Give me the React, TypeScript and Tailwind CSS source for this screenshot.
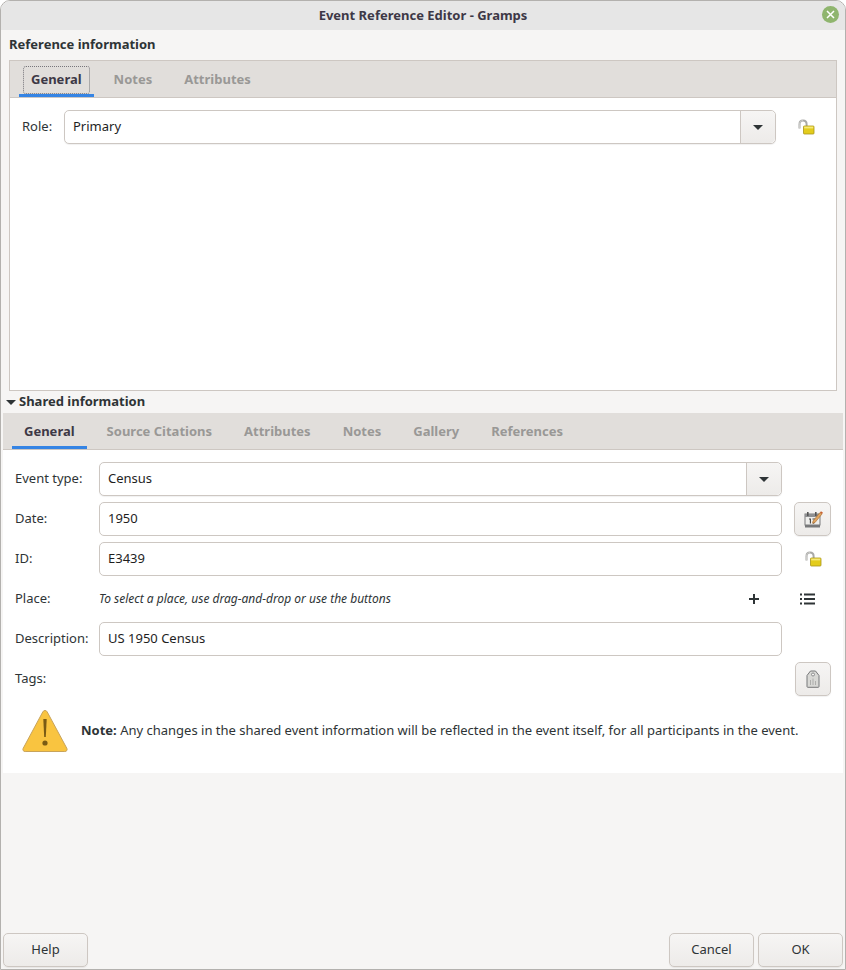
import type { ReactNode } from 'react'

const font = { fontFamily: '"Noto Sans", sans-serif' }

function LockIcon() {
  return (
    <svg width="18" height="16" viewBox="0 0 18 16">
      <path d="M2.5 9.5V5.2C2.5 3 4 1.6 6 1.6S9.6 3 9.6 5.2V7" fill="none" stroke="#a9a9a7" strokeWidth="2" />
      <path d="M2.5 9.5V5.2C2.5 3 4 1.6 6 1.6" fill="none" stroke="#dcdcda" strokeWidth="0.7" />
      <rect x="6.5" y="7" width="10.5" height="8" rx="0.8" fill="#e3cc1c" stroke="#a8941a" strokeWidth="0.8" />
      <rect x="7.2" y="7.6" width="9" height="1.8" fill="#f6e978" />
    </svg>
  )
}

function CalendarIcon() {
  return (
    <svg width="20" height="20" viewBox="0 0 20 20">
      <path d="M2 15h15v3.5H2z" fill="#77787a" />
      <rect x="2" y="5" width="15" height="11" fill="#eeeeec" stroke="#7a7b7c" />
      <rect x="2" y="5" width="15" height="3" fill="#8f9092" />
      <rect x="4" y="3" width="1.6" height="4" fill="#555" />
      <rect x="12" y="3" width="1.6" height="4" fill="#555" />
      <path d="M6 10h1.4v4.6M9.5 10h3l-2 4.6" fill="none" stroke="#444" strokeWidth="1.1" />
      <path d="M10 12L17 3.5l2 1.5-7 8.5-2.5.8z" fill="#e0a560" stroke="#a8692c" strokeWidth="0.6" />
      <path d="M17 3.5l1-1.2 2 1.5-1 1.2z" fill="#c9602f" />
    </svg>
  )
}

function TagIcon() {
  return (
    <svg width="14" height="18" viewBox="0 0 14 18">
      <path d="M1 5.5L4.5 1h5L13 5.5V16.5a.8.8 0 0 1-.8.8H1.8a.8.8 0 0 1-.8-.8z" fill="#d8d8d5" stroke="#77787a" />
      <circle cx="7" cy="4.5" r="1.5" fill="#f6f5f4" stroke="#77787a" strokeWidth="0.8" />
      <path d="M4.5 10v5M7 8.5v6.5M9.5 11v4" stroke="#a9a9a7" strokeWidth="0.9" />
    </svg>
  )
}

function WarningIcon() {
  return (
    <svg width="46" height="44" viewBox="0 0 46 44">
      <path
        d="M23 1.5c1 0 1.7.5 2.2 1.4l19.6 36.4c.9 1.7-.1 3.2-2 3.2H3.2c-1.9 0-2.9-1.5-2-3.2L20.8 2.9C21.300 2 22 1.500 23 1.500z"
        fill="#f9c440"
        stroke="#c8a35a"
      />
      <path d="M21.300 10h3.400l-.9 18h-1.600z" fill="#7a5b14" />
      <circle cx="23" cy="34" r="2.600" fill="#7a5b14" />
    </svg>
  )
}

function PlusIcon() {
  return (
    <svg width="12" height="12" viewBox="0 0 12 12">
      <path d="M6 1v10M1 6h10" stroke="#2e3436" strokeWidth="2" />
    </svg>
  )
}

function ListIcon() {
  return (
    <svg width="16" height="12" viewBox="0 0 16 12">
      <path d="M4 1.500h11M4 6h11M4 10.500h11" stroke="#2e3436" strokeWidth="2" />
      <path d="M0 .5h2v2H0zM0 5h2v2H0zM0 9.500h2v2H0z" fill="#2e3436" />
    </svg>
  )
}

function Arrow() {
  return <span className="w-0 h-0 border-x-[5px] border-x-transparent border-t-[5px] border-t-[#2e3436]" />
}

function Tab({ label, active, focused }: { label: string; active?: boolean; focused?: boolean }) {
  return (
    <div
      className={`h-[36px] px-[4px] flex items-start pt-[5px] border-b-[3px] ${active ? 'border-[#3584e4]' : 'border-transparent'}`}
    >
      <span
        className={`px-[7px] h-[28px] flex items-center font-bold text-[13px] border border-dotted ${
          focused ? 'border-[#77767b] rounded-[3px]' : 'border-transparent'
        } ${active ? 'text-[#3d3846]' : 'text-[#999896]'}`}
      >
        {label}
      </span>
    </div>
  )
}

function Entry({ value }: { value: string }) {
  return (
    <div className="h-[34px] flex-1 bg-white border border-[#cdc7c2] rounded-[5px] flex items-center px-[8px] text-[13px] text-[#1e1e1e]">
      {value}
    </div>
  )
}

function Combo({ value }: { value: string }) {
  return (
    <div className="h-[34px] flex-1 bg-white border border-[#cdc7c2] rounded-[5px] flex items-center text-[13px] text-[#1e1e1e] shadow-[0_1px_1px_rgba(0,0,0,0.06)]">
      <span className="flex-1 px-[8px]">{value}</span>
      <span className="w-[35px] h-full flex items-center justify-center border-l border-[#cdc7c2] bg-gradient-to-b from-[#f6f5f4] to-[#edebe9] rounded-r-[5px]">
        <Arrow />
      </span>
    </div>
  )
}

function IconButton({ children, className }: { children: ReactNode; className?: string }) {
  return (
    <div
      className={`h-[34px] border border-[#cdc7c2] rounded-[5px] bg-gradient-to-b from-[#f6f5f4] to-[#edebe9] flex items-center justify-center shadow-[0_1px_1px_rgba(0,0,0,0.06)] ${className ?? ''}`}
    >
      {children}
    </div>
  )
}

function FormRow({ label, children, side }: { label: string; children?: ReactNode; side?: ReactNode }) {
  return (
    <div className="h-[34px] flex items-center">
      <span className="w-[84px] shrink-0 text-[13px] text-[#2e3436]">{label}</span>
      <div className="w-[683px] shrink-0 flex items-center">{children}</div>
      <div className="ml-[12px] w-[37px] shrink-0 flex items-center justify-center">{side}</div>
    </div>
  )
}

export default function App() {
  return (
    <div
      className="w-[846px] h-[970px] flex flex-col bg-[#f6f5f4] border border-[#b3b1ae] rounded-t-[10px] overflow-hidden text-[#2e3436]"
      style={font}
    >
      <div className="h-[29px] shrink-0 bg-[#e6e6e6] flex items-center justify-center relative">
        <span className="font-bold text-[13px] text-[#3d3846]">Event Reference Editor - Gramps</span>
        <span className="absolute right-[6px] top-[5px] w-[17px] h-[17px] rounded-full bg-[#8fb56e] flex items-center justify-center">
          <svg width="9" height="9" viewBox="0 0 9 9">
            <path d="M1 1l7 7M8 1l-7 7" stroke="#fff" strokeWidth="1.500" />
          </svg>
        </span>
      </div>

      <div className="flex-1 flex flex-col min-h-0">
        <div className="h-[30px] shrink-0 pl-[8px] flex items-center font-bold text-[13px] text-[#2e3436]">
          Reference information
        </div>

        <div className="mx-[8px] h-[331px] shrink-0 border border-[#cdc7c2] bg-white flex flex-col">
          <div className="h-[37px] shrink-0 flex pl-[9px] gap-[8px] bg-[#e1dedb] border-b border-[#cdc7c2]">
            <Tab label="General" active focused />
            <Tab label="Notes" />
            <Tab label="Attributes" />
          </div>
          <div className="pt-[12px] pl-[12px] flex items-center">
            <span className="w-[42px] text-[13px] text-[#2e3436]">Role:</span>
            <div className="w-[712px] flex">
              <Combo value="Primary" />
            </div>
            <span className="ml-[21px]">
              <LockIcon />
            </span>
          </div>
        </div>

        <div className="h-[22px] shrink-0 pl-[5px] flex items-center gap-[3px] font-bold text-[13px] text-[#2e3436]">
          <Arrow />
          <span>Shared information</span>
        </div>

        <div className="mx-[2px] h-[360px] shrink-0 bg-white flex flex-col">
          <div className="h-[37px] shrink-0 flex pl-[9px] gap-[8px] bg-[#e1dedb] border-b border-[#cdc7c2]">
            <Tab label="General" active />
            <Tab label="Source Citations" />
            <Tab label="Attributes" />
            <Tab label="Notes" />
            <Tab label="Gallery" />
            <Tab label="References" />
          </div>
          <div className="pt-[12px] pl-[12px] flex flex-col gap-[6px]">
            <FormRow label="Event type:">
              <Combo value="Census" />
            </FormRow>
            <FormRow
              label="Date:"
              side={
                <IconButton className="w-[37px]">
                  <CalendarIcon />
                </IconButton>
              }
            >
              <Entry value="1950" />
            </FormRow>
            <FormRow label="ID:" side={<LockIcon />}>
              <Entry value="E3439" />
            </FormRow>
            <div className="h-[34px] flex items-center">
              <span className="w-[84px] shrink-0 text-[13px] text-[#2e3436]">Place:</span>
              <span className="w-[649px] shrink-0 text-[12px] italic text-[#2e3436]">
                To select a place, use drag-and-drop or use the buttons
              </span>
              <span className="w-[12px] flex">
                <PlusIcon />
              </span>
              <span className="ml-[40px]">
                <ListIcon />
              </span>
            </div>
            <FormRow label="Description:">
              <Entry value="US 1950 Census" />
            </FormRow>
            <FormRow
              label="Tags:"
              side={
                <IconButton className="w-[36px]">
                  <TagIcon />
                </IconButton>
              }
            />
          </div>
          <div className="mt-[13px] pl-[19px] flex items-center gap-[13px]">
            <WarningIcon />
            <p className="text-[13px] text-[#2e3436]">
              <b>Note:</b> Any changes in the shared event information will be reflected in the event itself, for all
              participants in the event.
            </p>
          </div>
        </div>

        <div className="flex-1" />

        <div className="h-[34px] mb-[2px] mx-[2px] shrink-0 flex items-center gap-[4px] text-[13px]">
          <IconButton className="w-[85px]">Help</IconButton>
          <div className="flex-1" />
          <IconButton className="w-[85px]">Cancel</IconButton>
          <IconButton className="w-[85px]">OK</IconButton>
        </div>
      </div>
    </div>
  )
}
